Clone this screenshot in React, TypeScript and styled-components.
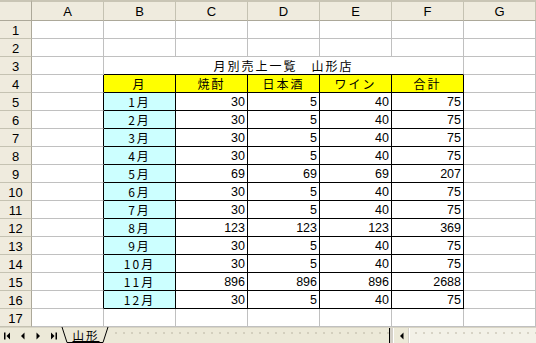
import React from 'react';
import styled, { createGlobalStyle } from 'styled-components';

const GlobalStyle = createGlobalStyle`
    html, body {
        margin: 0;
        padding: 0;
        background: #ffffff;
        overflow: hidden;
    }
    body {
        font-family: "Liberation Sans", "Noto Sans CJK JP", sans-serif;
    }
`;

const FONT = `"Liberation Sans", "Noto Sans CJK JP", sans-serif`;
const CJK = `"Noto Sans CJK JP", sans-serif`;
const GRID = '#c0c0c0';
const INK = '#000000';
const FACE = '#ece9d8';

const Window = styled.div`
    width: 536px;
    height: 343px;
    display: flex;
    flex-direction: column;
    overflow: hidden;
    background: #ffffff;
`;

const Sheet = styled.div`
    display: grid;
    grid-template-columns: 32px repeat(7, 72px);
    grid-template-rows: 21px repeat(17, 18px);
    font-family: ${FONT};
    font-size: 12px;
    color: #000;
`;

const Corner = styled.div`
    background: #efebde;
    border-top: 2px solid #c9c5b5;
    border-right: 1px solid #aca899;
    border-bottom: 1px solid #aca899;
`;

const ColHead = styled.div`
    background: #efebde;
    border-top: 2px solid #c9c5b5;
    border-right: 1px solid #c5c2b2;
    border-bottom: 1px solid #aca899;
    display: flex;
    align-items: center;
    justify-content: center;
    font-size: 13px;
    padding-top: 1px;
`;

const RowHead = styled.div`
    background: #efebde;
    border-right: 1px solid #aca899;
    border-bottom: 1px solid #c5c2b2;
    display: flex;
    align-items: center;
    justify-content: center;
    font-size: 13px;
    padding-top: 1px;
`;

const Cell = styled.div<{ $fill?: string; $right?: string; $bottom?: string; $align?: string; $span?: number }>`
    grid-column: span ${p => p.$span || 1};
    background: ${p => p.$fill || '#ffffff'};
    border-right: 1px solid ${p => p.$right || GRID};
    border-bottom: 1px solid ${p => p.$bottom || GRID};
    display: flex;
    align-items: flex-end;
    justify-content: ${p => p.$align || 'flex-start'};
    padding: 0 2px 0 2px;
    font-size: 12.5px;
    line-height: 16px;
    white-space: nowrap;
`;

// the original bitmap font sets kanji on a wide pitch; spacing stands in for it
const Kanji = styled.span<{ $track?: number }>`
    font-family: ${CJK};
    font-size: 12px;
    line-height: 16px;
    letter-spacing: ${p => p.$track ?? 1}px;
`;

const TabBar = styled.div`
    height: 16px;
    flex-shrink: 0;
    display: flex;
    background: ${FACE};
    font-family: ${FONT};
    font-size: 13px;
    border-top: 1px solid #d8d4c4;
`;

const NavGroup = styled.div`
    width: 60px;
    display: flex;
    align-items: center;
`;

const NavButton = styled.div`
    width: 15px;
    height: 15px;
    display: flex;
    align-items: center;
    justify-content: center;
`;

const Tab = styled.div`
    position: relative;
    width: 50px;
    height: 16px;
    display: flex;
    align-items: flex-end;
    justify-content: center;
    margin-top: -1px;
`;

const TabShape = styled.svg`
    position: absolute;
    left: 0;
    top: 0;
`;

const TabLabel = styled.span`
    position: relative;
    display: block;
    font-family: ${CJK};
    font-size: 11.5px;
    letter-spacing: 2px;
    padding-left: 2px;
    text-decoration: underline;
    line-height: 16px;
`;

const Dotted = styled.div<{ $w?: number }>`
    ${p => (p.$w ? `width: ${p.$w}px;` : 'flex: 1;')}
    background-image: radial-gradient(circle, #b5b19f 0.6px, transparent 0.8px);
    background-size: 8px 8px;
    background-position: 2px 1px;
    background-repeat: repeat-x;
`;

const Splitter = styled.div`
    width: 3px;
    border-left: 1px solid #000;
    border-right: 1px solid #ffffff;
    background: #d4d0c8;
`;

const ScrollButton = styled.div`
    width: 15px;
    display: flex;
    align-items: center;
    justify-content: center;
    border-right: 1px solid #ffffff;
    box-shadow: inset -1px 0 0 #d4d0c8;
`;

const Track = styled(Dotted)`
    background-color: #f3f1e7;
`;

const COLS = ['A', 'B', 'C', 'D', 'E', 'F', 'G'];

type Row = [number, number, number, number];
const sales: Row[] = [
    [30, 5, 40, 75],
    [30, 5, 40, 75],
    [30, 5, 40, 75],
    [30, 5, 40, 75],
    [69, 69, 69, 207],
    [30, 5, 40, 75],
    [30, 5, 40, 75],
    [123, 123, 123, 369],
    [30, 5, 40, 75],
    [30, 5, 40, 75],
    [896, 896, 896, 2688],
    [30, 5, 40, 75],
];

const heads = ['月', '焼酎', '日本酒', 'ワイン', '合計'];

function Tri({ dir, bar }: { dir: 'l' | 'r'; bar?: boolean }) {
    return (
        <svg width="8" height="8" viewBox="0 0 8 8">
            {dir === 'l' ? (
                <>
                    {bar && <rect x="0" y="0.5" width="1.5" height="7" fill="#000" />}
                    <polygon points={bar ? '6,0.5 2.5,4 6,7.5' : '5.5,0.5 2,4 5.5,7.5'} fill="#000" />
                </>
            ) : (
                <>
                    <polygon points={bar ? '2,0.5 5.5,4 2,7.5' : '2.5,0.5 6,4 2.5,7.5'} fill="#000" />
                    {bar && <rect x="6.5" y="0.5" width="1.5" height="7" fill="#000" />}
                </>
            )}
        </svg>
    );
}

function cellsFor(r: number) {
    const out: React.ReactNode[] = [];
    if (r === 3) {
        out.push(<Cell key="a" />);
        out.push(
            <Cell key="t" $span={5} $bottom={INK} $align="center">
                <Kanji $track={2}>月別売上一覧　山形店</Kanji>
            </Cell>
        );
        out.push(<Cell key="g" />);
        return out;
    }
    const inRows = r >= 4 && r <= 16;
    COLS.forEach((_, c) => {
        const inTable = inRows && c >= 1 && c <= 5;
        const right = inTable || (inRows && c === 0) ? INK : GRID;
        const bottom = inTable ? INK : GRID;
        let fill: string | undefined;
        let text: React.ReactNode = null;
        let align = 'flex-start';
        if (r === 4 && inTable) {
            fill = '#ffff00';
            text = <Kanji $track={2}>{heads[c - 1]}</Kanji>;
            align = 'center';
        } else if (inTable && c === 1) {
            fill = '#ccffff';
            text = <Kanji $track={2}>{`${r - 4}月`}</Kanji>;
            align = 'center';
        } else if (inTable) {
            text = sales[r - 5][c - 2];
            align = 'flex-end';
        }
        out.push(
            <Cell key={c} $fill={fill} $right={right} $bottom={bottom} $align={align}>
                {text}
            </Cell>
        );
    });
    return out;
}

export default function App() {
    const rows = Array.from({ length: 17 }, (_, i) => i + 1);
    return (
        <>
            <GlobalStyle />
            <Window>
                <Sheet>
                    <Corner />
                    {COLS.map(c => (
                        <ColHead key={c}>{c}</ColHead>
                    ))}
                    {rows.map(r => (
                        <React.Fragment key={r}>
                            <RowHead>{r}</RowHead>
                            {cellsFor(r)}
                        </React.Fragment>
                    ))}
                </Sheet>
                <TabBar>
                    <NavGroup>
                        <NavButton><Tri dir="l" bar /></NavButton>
                        <NavButton><Tri dir="l" /></NavButton>
                        <NavButton><Tri dir="r" /></NavButton>
                        <NavButton><Tri dir="r" bar /></NavButton>
                    </NavGroup>
                    <Tab>
                        <TabShape width="50" height="16" viewBox="0 0 50 16">
                            <polyline points="2,0 7,15.5 43,15.5 48,0" fill="none" stroke="#000" strokeWidth="1" />
                        </TabShape>
                        <TabLabel>山形</TabLabel>
                    </Tab>
                    <Dotted />
                    <Splitter />
                    <ScrollButton><Tri dir="l" /></ScrollButton>
                    <Track $w={126} />
                </TabBar>
            </Window>
        </>
    );
}
